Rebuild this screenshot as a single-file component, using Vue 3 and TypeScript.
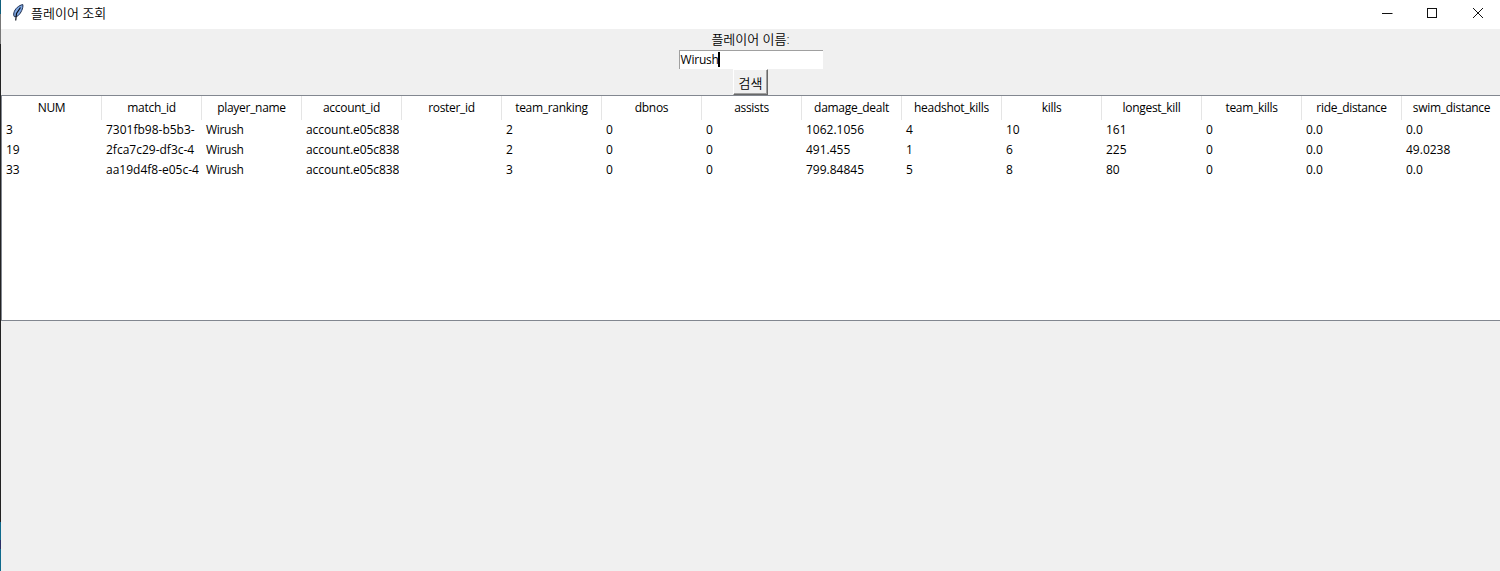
<script setup lang="ts">
const columns: string[] = ['NUM','match_id','player_name','account_id','roster_id','team_ranking','dbnos','assists','damage_dealt','headshot_kills','kills','longest_kill','team_kills','ride_distance','swim_distance'];
const rows: string[][] = [
  ['3','7301fb98-b5b3-','Wirush','account.e05c838','','2','0','0','1062.1056','4','10','161','0','0.0','0.0'],
  ['19','2fca7c29-df3c-4','Wirush','account.e05c838','','2','0','0','491.455','1','6','225','0','0.0','49.0238'],
  ['33','aa19d4f8-e05c-4','Wirush','account.e05c838','','3','0','0','799.84845','5','8','80','0','0.0','0.0'],
];
</script>

<template>
  <div class="window">
    <div class="edge"></div>
    <div class="main">
      <header class="titlebar">
        <svg class="feather" width="11" height="17" viewBox="0 0 11 17">
          <path d="M9.800.6C6 1.200 1.800 4.800.9 8.800c-.4 1.800-.2 3 .5 3.900 1.200.1 2.900-.3 4-1.300C7.800 9.200 10.500 4 9.800.6z" fill="#7da6e2" stroke="#1a2a4a" stroke-width="1"/>
          <path d="M7.500 3.500 3.500 9.500 2.700 16.500" fill="none" stroke="#0a0f1a" stroke-width="1.200"/>
        </svg>
        <span class="title">플레이어 조회</span>
        <div class="controls">
          <svg width="46" height="29" viewBox="0 0 46 29"><path d="M19 13.500h10.500" stroke="#111" fill="none"/></svg>
          <svg width="46" height="29" viewBox="0 0 46 29"><rect x="18.500" y="8.500" width="9" height="9" fill="none" stroke="#111"/></svg>
          <svg width="46" height="29" viewBox="0 0 46 29"><path d="M18 8l10 10M28 8 18 18" stroke="#111" fill="none"/></svg>
        </div>
      </header>
      <section class="form">
        <label class="label">플레이어 이름:</label>
        <div class="entry"><span>Wirush</span><i class="caret"></i></div>
        <button class="search">검색</button>
      </section>
      <div class="tree">
        <div class="thead">
          <div v-for="c in columns" :key="c" class="th">{{ c }}</div>
        </div>
        <div v-for="(r, i) in rows" :key="i" class="tr">
          <div v-for="(v, j) in r" :key="j" class="td">{{ v }}</div>
        </div>
      </div>
    </div>
  </div>
</template>

<style>
html, body { margin: 0; overflow: hidden; background: #f0f0f0; }
</style>

<style scoped>
.window { display: flex; width: 1500px; height: 571px; font: 12px "Open Sans", "Noto Sans CJK KR", sans-serif; color: #000; background: #f0f0f0; overflow: hidden; }
.edge { width: 1px; flex: none; background: linear-gradient(#0f5f7c 0, #0f5f7c 14px, #777 14px, #777 44px, #222 44px, #222 522px, #0f6a8c 522px, #0f6a8c 540px, #2a2f66 540px, #2a2f66 549px, #0f6a8c 549px); }
.main { flex: 1; min-width: 0; display: flex; flex-direction: column; }
.titlebar { height: 29px; flex: none; background: #fff; display: flex; align-items: center; padding-left: 12px; box-sizing: border-box; }
.feather { margin-right: 7px; margin-top: -4px; }
.title { font-size: 13px; font-weight: 350; line-height: 27px; padding-bottom: 2px; }
.controls { margin-left: auto; display: flex; height: 29px; margin-right: -1px; }
.form { height: 66px; flex: none; display: flex; flex-direction: column; align-items: center; box-sizing: border-box; }
.label { font-size: 13px; font-weight: 350; height: 21px; line-height: 21px; }
.entry { width: 144px; height: 19px; box-sizing: border-box; background: #fff; border-top: 1px solid #a0a0a0; border-left: 1px solid #a0a0a0; padding: 0 0 2px 1px; display: flex; align-items: center; letter-spacing: -0.2px; }
.caret { width: 2px; height: 15px; background: #000; margin-left: -1px; }
.search { width: 35px; height: 26px; padding: 0; font: inherit; font-size: 13px; font-weight: 350; color: #000; background: #f0f0f0; border: 1px solid; border-color: #fff #696969 #696969 #fff; box-shadow: inset -1px -1px 0 #a0a0a0; }
.tree { height: 226px; flex: none; background: #fff; border-top: 1px solid #828790; border-bottom: 1px solid #828790; border-left: 1px solid #828790; box-sizing: border-box; overflow: hidden; }
.thead, .tr { display: flex; }
.thead { height: 24px; }
.th { width: 100px; flex: none; box-sizing: border-box; text-align: center; line-height: 23px; border-right: 1px solid #e5e5e5; letter-spacing: -0.3px; }
.tr { height: 20px; }
.td { width: 100px; flex: none; box-sizing: border-box; padding-left: 4px; border-right: 3px solid #fff; line-height: 20px; white-space: nowrap; overflow: hidden; }
.td:nth-child(3) { letter-spacing: -0.3px; }
.td:nth-child(4) { letter-spacing: -0.07px; }
</style>
